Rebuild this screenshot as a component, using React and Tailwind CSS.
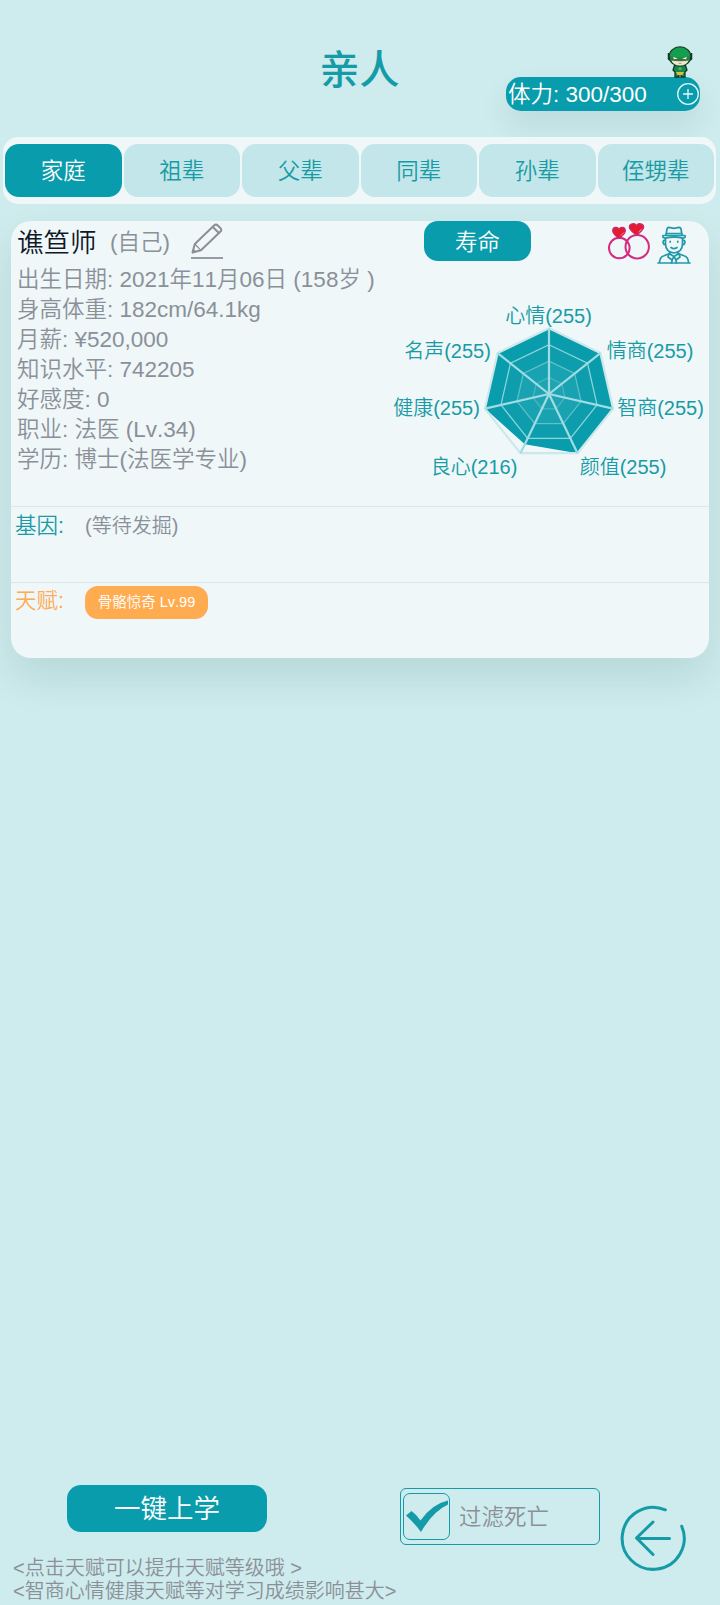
import React from "react";

const tabs = ["家庭", "祖辈", "父辈", "同辈", "孙辈", "侄甥辈"];

const info = [
  "出生日期: 2021年11月06日 (158岁 )",
  "身高体重: 182cm/64.1kg",
  "月薪: ¥520,000",
  "知识水平: 742205",
  "好感度: 0",
  "职业: 法医 (Lv.34)",
  "学历: 博士(法医学专业)",
];

const stats = [
  { name: "心情", value: 255, x: 549.5, y: 322.5 },
  { name: "情商", value: 255, x: 651, y: 357.5 },
  { name: "智商", value: 255, x: 661.5, y: 415 },
  { name: "颜值", value: 255, x: 624, y: 473.5 },
  { name: "良心", value: 216, x: 475, y: 473.5 },
  { name: "健康", value: 255, x: 437.5, y: 415 },
  { name: "名声", value: 255, x: 448.5, y: 357.5 },
];

const CX = 550;
const CY = 394;
const R = 65.7;

function point(i, r) {
  const a = (i * 2 * Math.PI) / 7;
  return [CX + r * Math.sin(a), CY - r * Math.cos(a)];
}

function ring(scale) {
  return stats.map((_, i) => point(i, R * scale).join(",")).join(" ");
}

function Radar() {
  const shape = stats.map((s, i) => point(i, (R * s.value) / 255).join(",")).join(" ");
  return (
    <svg viewBox="385 300 325 190" className="h-[190px] w-[325px] shrink-0">
      <polygon points={shape} fill="#099cac" />
      <polygon points={ring(0.75)} fill="#ffffff" fillOpacity="0.02" stroke="#8fd6dc" strokeWidth="1.2" />
      <polygon points={ring(0.5)} fill="#ffffff" fillOpacity="0.05" stroke="#62c0c9" strokeWidth="1.2" />
      <polygon points={ring(0.25)} fill="#ffffff" fillOpacity="0.03" stroke="#4db5bf" strokeWidth="1.2" />
      <polygon points={ring(1)} fill="none" stroke="#cbe8ea" strokeWidth="2.2" />
      {stats.map((s, i) => {
        const [x, y] = point(i, R);
        return <line key={s.name} x1={CX} y1={CY} x2={x} y2={y} stroke="#9fdde2" strokeWidth="2.2" />;
      })}
      {stats.map((s) => (
        <text key={s.name} x={s.x} y={s.y} textAnchor="middle" fontSize="20" fill="#189ba5">
          {s.name}({s.value})
        </text>
      ))}
    </svg>
  );
}

function Hero() {
  return (
    <svg viewBox="0 0 26 32" className="h-8 w-[26px]">
      <path d="M8 18h10l2 6-2 2v5h-4v-3h-2v3H8v-5l-2-2z" fill="#138a45" stroke="#17352a" strokeWidth="1.3" />
      <path d="M9 26h8l-1.500 3h-5z" fill="#e0b93c" />
      <circle cx="13" cy="22.5" r="1.6" fill="#55b860" />
      <path d="M1.500 7v6l3 2M24.500 7v6l-3 2" fill="#12a04e" stroke="#17352a" strokeWidth="1.5" />
      <ellipse cx="13" cy="10.500" rx="10.800" ry="9.700" fill="#12a04e" stroke="#17352a" strokeWidth="1.1" />
      <path d="M4 13.500q9 2.500 18 0q-2 6-9 6t-9-6z" fill="#f3e2cd" />
      <path d="M3 10q10 3.500 20 0l-.7 4.500q-9.300 1.500-18.600 0z" fill="#31783f" />
      <path d="M6 11l5 1.500-4 .8zM20 11l-5 1.500 4 .8z" fill="#f4fff4" />
      <path d="M11.500 17.300q1.500.6 3 0" fill="none" stroke="#a58a78" strokeWidth=".7" />
    </svg>
  );
}

function Pencil() {
  return (
    <svg viewBox="0 0 32 36" className="h-9 w-8" fill="none" stroke="#8b9098" strokeWidth="2" strokeLinejoin="round" strokeLinecap="round">
      <path d="M1.500 29.500L3.800 21L23 2.500Q25 .8 26.800 2.500L29.500 5.200Q31 7 29.500 8.500L10 27.300Z" />
      <path d="M3.800 21L10 27.300" strokeWidth="1.200" />
      <path d="M21.800 4L27.900 10" />
      <path d="M1.500 29.500l1-3.300 2.200 2.300z" fill="#8b9098" strokeWidth="1" />
      <path d="M0 35h32" strokeWidth="1.800" strokeLinecap="butt" />
    </svg>
  );
}

function Rings() {
  return (
    <svg viewBox="0 0 42 37" className="h-[37px] w-[42px]">
      <g fill="none" stroke="#d42b80" strokeWidth="2">
        <circle cx="11.300" cy="25" r="10.300" />
        <circle cx="29.200" cy="23.700" r="11.700" />
      </g>
      <g fill="#e51c2c" stroke="#c9287a" strokeWidth="1.2">
        <path d="M11 15.500C6.500 12 4.700 10 4.700 7.700c0-3.600 4.600-4.600 6.300-1.500 1.700-3.100 6.300-2.100 6.300 1.500 0 2.300-1.800 4.300-6.300 7.800z" />
        <path d="M28.500 12.300c-5-3.800-7.200-6-7.200-8.200 0-3.800 5.500-4.700 7.200-1.500 1.700-3.200 7.200-2.300 7.200 1.500 0 2.200-2.200 4.400-7.200 8.200z" />
      </g>
      <path d="M13 12.500l2.800-3M30.500 9.300l3.300-3.400" stroke="#f08ab0" strokeWidth="1" />
    </svg>
  );
}

function Gentleman() {
  return (
    <svg viewBox="0 0 34 38" className="h-[38px] w-[34px]" fill="none" stroke="#2199a8" strokeWidth="1.700" strokeLinejoin="round" strokeLinecap="round">
      <path d="M9 9l1-6q.4-1.600 2-1.600l5 .9 5-.9q1.600 0 2 1.600l1 6" />
      <path d="M6 9.500h22q1 2.400-2 2.600-9-1.800-18 0-3-.2-2-2.600zM9.500 7.500h15" />
      <path d="M8.500 12.500v5q0 8.500 8.500 9.500 8.500-1 8.500-9.500v-5M8.500 14q-3 0-2.300 3 .5 2 2.500 2M25.500 14q3 0 2.300 3-.5 2-2.500 2" />
      <path d="M13.200 15.300v.8M20.800 15.300v.8M14 21.500q3 2.300 6 0" />
      <path d="M1 37h32M2.500 37q0-6 4.500-7.300l6-2.200v-1.500M31.500 37q0-6-4.500-7.300l-6-2.200v-1.500" />
      <path d="M12 27.500l5 3 5-3M12 27.500l-1 3.500 4 3 2-3.500 2 3.500 4-3-1-3.500M15.500 33l-1 4M18.500 33l1 4" />
    </svg>
  );
}

function BackIcon() {
  return (
    <svg viewBox="0 0 66 66" className="h-[66px] w-[66px]" fill="none" stroke="#159ba7" strokeWidth="3" strokeLinecap="round" strokeLinejoin="round">
      <path d="M45.300 4.800A31 31 0 1 0 61.700 21.200" />
      <path d="M49.500 33.500H17M33 17L16.500 33L33 49.500" />
    </svg>
  );
}

export default function App() {
  return (
    <div className="flex h-[1605px] w-[720px] flex-col overflow-hidden bg-[#ceebed] font-['Liberation_Sans','Noto_Sans_CJK_SC',sans-serif] text-[22.5px] font-[350] text-[#8b9098] [font-kerning:none]">
      <header className="relative flex h-[137px] shrink-0 justify-center pt-[40px] pr-px">
        <h1 className="text-[40px] leading-[60px] font-medium text-[#159ba7]">亲人</h1>
        <div className="absolute top-[77px] left-[506px] flex h-[34px] w-[194px] items-center justify-between rounded-[15px] bg-[#099cac] pr-px pl-[2px] text-white shadow-[0_15px_30px_rgba(0,60,70,0.09)]">
          <span className="pt-px leading-[34px]">体力: 300/300</span>
          <svg viewBox="0 0 22 22" className="h-[22px] w-[22px]" fill="none" stroke="#e8f8fa" strokeWidth="1.3">
            <circle cx="11" cy="11" r="10.300" />
            <path d="M11 6v10M6 11h10" />
          </svg>
        </div>
        <div className="absolute top-[46px] left-[667px]">
          <Hero />
        </div>
      </header>

      <nav className="relative mr-[4px] ml-[3px] grid h-[67px] shrink-0 grid-cols-6 gap-[2px] rounded-[15px] bg-[#eff7f9] py-[7px] pr-[2px] pl-[2px] text-[#189ba5]">
        {tabs.map((tab, i) => (
          <button
            key={tab}
            className={
              i === 0
                ? "rounded-[14px] bg-[#099cac] pt-[3px] text-center text-white"
                : "rounded-[14px] bg-[#c2e6e9] pt-[3px] text-center"
            }
          >
            {tab}
          </button>
        ))}
      </nav>

      <main className="mt-[17px] mr-[11px] ml-[11px] flex h-[437px] shrink-0 flex-col rounded-[20px] bg-[#eff7f9] shadow-[0_20px_40px_rgba(0,60,60,0.11)]">
        <section className="flex h-[286px] shrink-0 flex-col border-b border-[#dbe7e9]">
          <div className="flex h-[43px] shrink-0 items-start pl-[6px]">
            <h2 className="w-[93px] pt-px text-[26.5px] leading-[43px] text-[#101828]">谯笪师</h2>
            <span className="w-[81px] leading-[43px]">(自己)</span>
            <div className="w-[233px] pt-[2px]">
              <Pencil />
            </div>
            <button className="h-[40px] w-[107px] rounded-[14px] bg-[#099cac] pt-[3px] text-center text-white">寿命</button>
            <div className="ml-[77px] pt-[2px]">
              <Rings />
            </div>
            <div className="ml-[7px] pt-[5px]">
              <Gentleman />
            </div>
          </div>
          <div className="flex">
            <ul className="w-[373px] shrink-0 pt-px pl-[6px] leading-[30px] whitespace-nowrap">
              {info.map((line) => (
                <li key={line}>{line}</li>
              ))}
            </ul>
            <div className="pt-[36px]">
              <Radar />
            </div>
          </div>
        </section>
        <section className="flex h-[76px] shrink-0 border-b border-[#dbe7e9] pt-[3px] pl-[4px]">
          <h3 className="w-[70px] text-[21.5px] leading-[32px] text-[#189ba5]">基因:</h3>
          <p className="text-[20px] leading-[32px]">(等待发掘)</p>
        </section>
        <section className="flex items-start pt-[3px] pl-[4px]">
          <h3 className="w-[70px] text-[21.5px] leading-[30px] text-[#ffab55]">天赋:</h3>
          <button className="h-[33px] w-[123px] rounded-[13px] bg-[#ffab50] pt-px text-center text-[14.5px] text-white">
            骨骼惊奇 Lv.99
          </button>
        </section>
      </main>

      <footer className="mt-auto h-[120px] shrink-0">
        <div className="flex h-[70px] items-start">
          <button className="ml-[67px] h-[47px] w-[200px] rounded-[14px] bg-[#099cac] pt-[2px] text-center text-[26.5px] text-white">
            一键上学
          </button>
          <label className="mt-[3px] ml-[133px] flex h-[57px] w-[200px] items-center rounded-[6px] border border-[#159ba7] pl-[2px]">
            <span className="flex h-[47px] w-[47px] items-center justify-center rounded-[7px] border border-[#159ba7]">
              <svg viewBox="0 0 44 40" className="h-10 w-11" fill="#159ba7">
                <path d="M1 18.500L6.500 14Q12 18 15.500 23.500Q27 7 43 3.500V7.500Q28 14.500 16 35Q9 25.500 1 18.500z" />
              </svg>
            </span>
            <span className="ml-[9px] pt-[2px]">过滤死亡</span>
          </label>
          <div className="mt-[20px] ml-[20px]">
            <BackIcon />
          </div>
        </div>
        <div className="pt-[2px] pl-[13px] text-[20px] leading-[23px]">
          <p>&lt;点击天赋可以提升天赋等级哦 &gt;</p>
          <p>&lt;智商心情健康天赋等对学习成绩影响甚大&gt;</p>
        </div>
      </footer>
    </div>
  );
}
